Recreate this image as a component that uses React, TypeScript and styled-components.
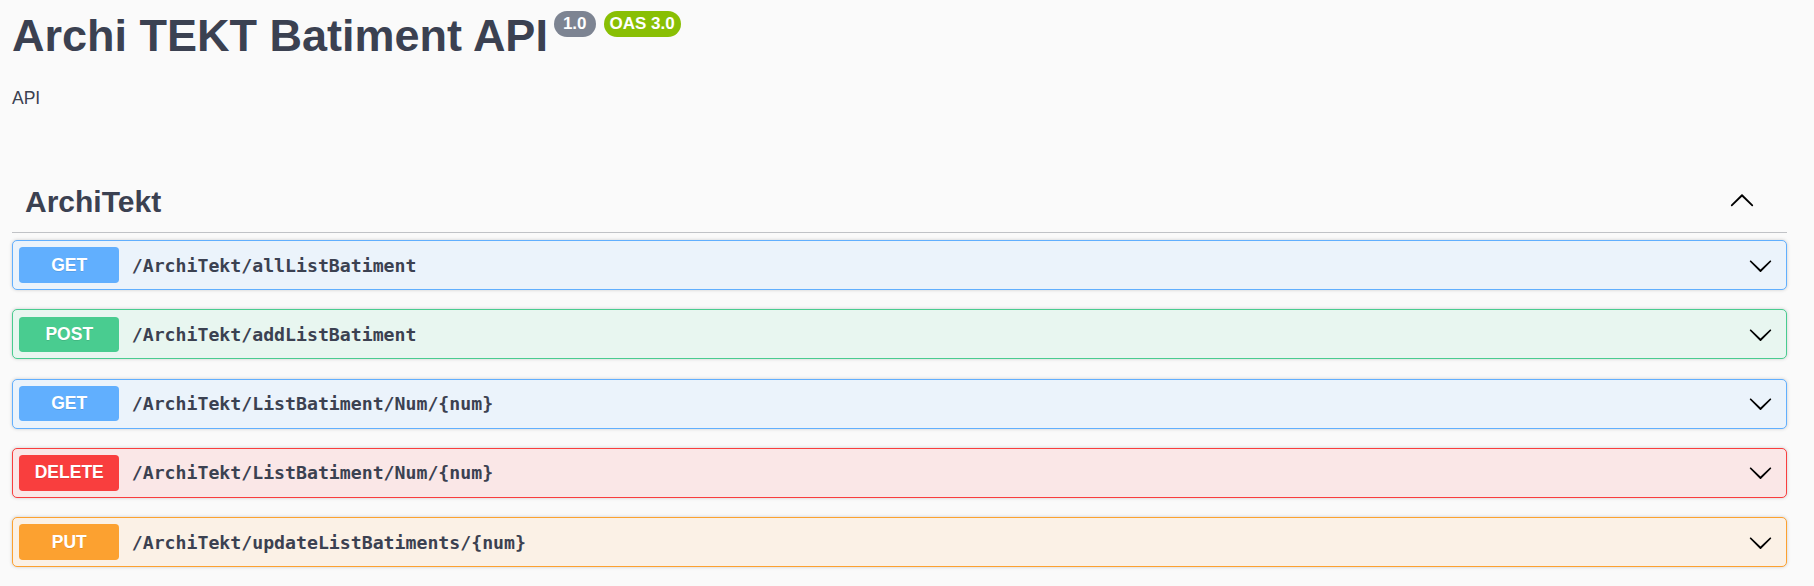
import React from "react";
import styled, { createGlobalStyle } from "styled-components";

const GlobalStyle = createGlobalStyle`
  html, body { margin: 0; padding: 0; background: #fafafa; }
  * { box-sizing: border-box; }
`;

const Page = styled.div`
  padding: 0 27px 20px 12px;
  font-family: "Liberation Sans", Arial, sans-serif;
  color: #3b4151;
`;

const Header = styled.div`
  display: flex;
  align-items: flex-start;
  padding-top: 10px;
`;

const Title = styled.h2`
  margin: 0;
  font-size: 45px;
  line-height: 52px;
  font-weight: 700;
  color: #3b4151;
`;

const Badges = styled.div`
  display: flex;
  gap: 8px;
  margin: 1px 0 0 6px;
`;

const Badge = styled.span<{ $bg: string; $pad: number }>`
  display: inline-flex;
  align-items: center;
  justify-content: center;
  height: 26px;
  padding: 0 ${(p) => p.$pad}px;
  border-radius: 57px;
  background: ${(p) => p.$bg};
  color: #fff;
  font-size: 17px;
  font-weight: 700;
  line-height: 26px;
`;

const Description = styled.p`
  margin: 24px 0 0;
  font-size: 17.5px;
  line-height: 24px;
`;

const Tag = styled.div`
  margin-top: 59px;
  display: flex;
  align-items: center;
  justify-content: space-between;
  padding: 13px 32px 10px 13px;
  border-bottom: 1px solid rgba(59, 65, 81, 0.3);
`;

const TagTitle = styled.h3`
  margin: 0;
  font-size: 30px;
  line-height: 40px;
  font-weight: 700;
  color: #3b4151;
`;

const TagArrow = styled.svg`
  width: 26px;
  height: 26px;
  margin-bottom: 3px;
  fill: #000;
`;

const OpList = styled.div`
  display: flex;
  flex-direction: column;
  gap: 19.3px;
  margin-top: 7px;
`;

const Op = styled.div<{ $color: string; $bg: string }>`
  display: flex;
  align-items: center;
  padding: 6.25px;
  border: 1px solid ${(p) => p.$color};
  background: ${(p) => p.$bg};
  border-radius: 5px;
  box-shadow: 0 0 3.75px rgba(0, 0, 0, 0.19);
`;

const Method = styled.span<{ $color: string }>`
  display: flex;
  align-items: center;
  justify-content: center;
  min-width: 100px;
  height: 35.5px;
  border-radius: 3.75px;
  background: ${(p) => p.$color};
  color: #fff;
  font-family: "Liberation Sans", Arial, sans-serif;
  font-size: 17.5px;
  font-weight: 700;
  text-shadow: 0 1px 0 rgba(0, 0, 0, 0.1);
`;

const Path = styled.span`
  flex: 1;
  margin-left: 12.5px;
  font-family: "DejaVu Sans Mono", "Liberation Mono", monospace;
  font-size: 18.2px;
  font-weight: 700;
  color: #3b4151;
`;

const OpArrow = styled.svg`
  width: 25px;
  height: 25px;
  margin-right: 7px;
  fill: #000;
`;

const ARROW =
  "M17.418 6.109c.272-.268.709-.268.979 0s.271.701 0 .969l-7.908 7.83c-.27.268-.707.268-.979 0l-7.908-7.830c-.27-.268-.27-.701 0-.969.271-.268.709-.268.979 0L10 13.25l7.418-7.141z";

const METHODS: Record<string, { color: string; bg: string }> = {
  GET: { color: "#61affe", bg: "#ebf3fb" },
  POST: { color: "#49cc90", bg: "#e8f6f0" },
  DELETE: { color: "#f93e3e", bg: "#fae7e7" },
  PUT: { color: "#fca130", bg: "#fbf1e6" },
};

const ops = [
  { method: "GET", path: "/ArchiTekt/allListBatiment" },
  { method: "POST", path: "/ArchiTekt/addListBatiment" },
  { method: "GET", path: "/ArchiTekt/ListBatiment/Num/{num}" },
  { method: "DELETE", path: "/ArchiTekt/ListBatiment/Num/{num}" },
  { method: "PUT", path: "/ArchiTekt/updateListBatiments/{num}" },
];

export default function App() {
  return (
    <>
      <GlobalStyle />
      <Page>
        <Header>
          <Title>Archi TEKT Batiment API</Title>
          <Badges>
            <Badge $bg="#7d8492" $pad={9}>1.0</Badge>
            <Badge $bg="#89bf04" $pad={6}>OAS 3.0</Badge>
          </Badges>
        </Header>
        <Description>API</Description>
        <Tag>
          <TagTitle>ArchiTekt</TagTitle>
          <TagArrow viewBox="0 0 20 20">
            <path d={ARROW} transform="rotate(180 10 10)" />
          </TagArrow>
        </Tag>
        <OpList>
          {ops.map((op, i) => {
            const m = METHODS[op.method];
            return (
              <Op key={i} $color={m.color} $bg={m.bg}>
                <Method $color={m.color}>{op.method}</Method>
                <Path>{op.path}</Path>
                <OpArrow viewBox="0 0 20 20">
                  <path d={ARROW} />
                </OpArrow>
              </Op>
            );
          })}
        </OpList>
      </Page>
    </>
  );
}
